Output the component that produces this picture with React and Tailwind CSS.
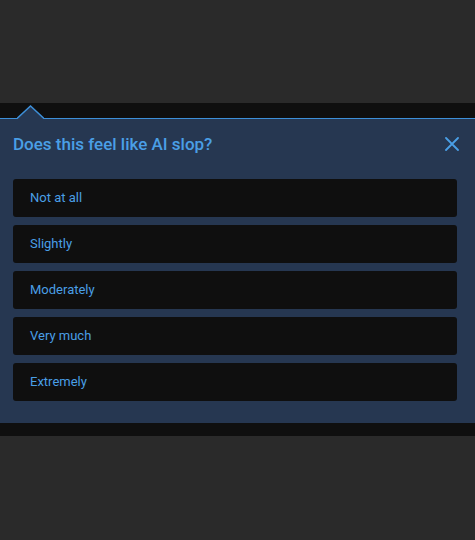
import React from "react";

const options = ["Not at all", "Slightly", "Moderately", "Very much", "Extremely"];

const App = () => {
  return (
    <div
      className="w-[475px] h-[540px] bg-[#2a2a2a] overflow-hidden"
      style={{ fontFamily: "Roboto, 'Noto Sans', sans-serif" }}
    >
      <div className="h-[103px]" />
      <div className="bg-[#0f0f0f] pt-[15px] pb-[13px]">
        <div className="relative bg-[#263751] border-t-[1.5px] border-[#3d8fd8] px-[13px] pt-[13px] pb-[22px]">
          {/* caret */}
          <svg
            className="absolute left-[17px] top-[-14px]"
            width="27"
            height="14"
            viewBox="0 0 27 14"
          >
            <path d="M0 14 L13.5 1 L27 14 Z" fill="#263751" />
            <path d="M0 13.5 L13.5 1 L27 13.5" fill="none" stroke="#3d8fd8" strokeWidth="1.5" />
          </svg>

          <div className="flex items-center justify-between h-[24px]">
            <h2 className="text-[17px] font-medium text-[#4a9fe6] leading-[24px]">
              Does this feel like AI slop?
            </h2>
            <button className="mr-[3px] text-[#4a9fe6]">
              <svg width="14" height="14" viewBox="0 0 14 14">
                <path
                  d="M1 1 L13 13 M13 1 L1 13"
                  stroke="currentColor"
                  strokeWidth="1.8"
                  strokeLinecap="round"
                />
              </svg>
            </button>
          </div>

          <div className="mt-[23px] mr-[5px] flex flex-col gap-2">
            {options.map((opt) => (
              <button
                key={opt}
                className="h-[38px] w-full text-left bg-[#0f0f0f] rounded-[3px] px-[17px] text-[13px] text-[#4a9fe6]"
              >
                {opt}
              </button>
            ))}
          </div>
        </div>
      </div>
    </div>
  );
};

export default App;
